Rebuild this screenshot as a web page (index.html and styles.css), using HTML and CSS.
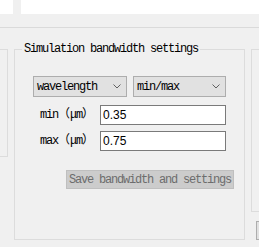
FILE: index.html
```html
<!DOCTYPE html>
<html lang="en">
<head>
    <meta charset="UTF-8">
    <meta name="viewport" content="width=device-width, initial-scale=1.0">
    <title>Simulation bandwidth settings</title>
    <link rel="stylesheet" href="styles.css">
</head>
<body>

<div class="topbar">
    <div class="topbar-left"></div>
    <div class="topbar-gap"></div>
    <div class="topbar-right"></div>
</div>
<div class="divider"></div>

<div class="panels">
    <div class="side-panel"></div>

    <div class="group">
        <div class="group-title">Simulation bandwidth settings</div>

        <div class="selects">
            <div class="combo combo-wide">
                <span>wavelength</span>
                <svg class="chevron" width="8" height="5" viewBox="0 0 8 5"><path d="M0.5 0.5 L4 4 L7.5 0.5" fill="none" stroke="#606060" stroke-width="1"/></svg>
            </div>
            <div class="combo">
                <span>min/max</span>
                <svg class="chevron" width="8" height="5" viewBox="0 0 8 5"><path d="M0.5 0.5 L4 4 L7.5 0.5" fill="none" stroke="#606060" stroke-width="1"/></svg>
            </div>
        </div>

        <div class="fields">
            <div class="field">
                <label class="field-label" for="min-value">min<span class="wide">（</span>μm<span class="wide">）</span></label>
                <input class="field-input" id="min-value" type="text" value="0.35">
            </div>
            <div class="field">
                <label class="field-label" for="max-value">max<span class="wide">（</span>μm<span class="wide">）</span></label>
                <input class="field-input" id="max-value" type="text" value="0.75">
            </div>
        </div>

        <button class="save-button" disabled>Save bandwidth and settings</button>
    </div>

    <div class="right-column">
        <div class="right-panel"></div>
        <div class="right-button"></div>
    </div>
</div>

</body>
</html>
```

FILE: styles.css
```css
body {
    margin: 0;
    background-color: #f0f0f0;
    font-family: "Liberation Mono", "Noto Sans CJK SC", monospace;
    font-size: 12px;
    letter-spacing: -1.2px;
    color: #000;
    overflow: hidden;
}
.topbar {
    display: flex;
    height: 14px;
}
.topbar-left {
    width: 13px;
    background: #fff;
}
.topbar-gap {
    width: 8px;
}
.topbar-right {
    flex: 1;
    background: #fff;
}
.divider {
    margin-top: 13px;
    height: 1px;
    background: #dadada;
}
.panels {
    display: flex;
    align-items: flex-start;
    padding-top: 21px;
}
.panels > * {
    flex-shrink: 0;
}
.side-panel {
    width: 7px;
    height: 106px;
    border: 1px solid #dcdcdc;
    border-left: none;
}
.group {
    margin-left: 6px;
    width: 211px;
    height: 189px;
    border: 1px solid #dcdcdc;
    padding-left: 18px;
}
.group-title {
    display: table;
    margin-top: -7px;
    margin-left: -11px;
    padding: 0 2px;
    line-height: 12px;
    background: #f0f0f0;
}
.selects {
    display: flex;
    gap: 6px;
    margin-top: 21px;
}
.combo {
    display: flex;
    align-items: center;
    justify-content: space-between;
    box-sizing: border-box;
    width: 93px;
    height: 21px;
    padding: 0 5px 0 3px;
    background: #e1e1e1;
    border: 1px solid #adadad;
    line-height: 12px;
}
.combo-wide {
    width: 94px;
}
.chevron {
    display: block;
}
.fields {
    display: flex;
    flex-direction: column;
    gap: 6px;
    margin-top: 8px;
}
.field {
    display: flex;
    align-items: center;
}
.field-label {
    width: 67px;
    padding-left: 7px;
    box-sizing: border-box;
    line-height: 12px;
}
.wide {
    letter-spacing: 0;
}
.field-input {
    box-sizing: border-box;
    width: 126px;
    height: 20px;
    margin: 0;
    padding: 0 2px;
    border: 1px solid #7a7a7a;
    background: #fff;
    font-family: "Liberation Sans", Arial, sans-serif;
    font-size: 12px;
    letter-spacing: 0;
    color: #000;
    outline: none;
}
.save-button {
    display: block;
    box-sizing: border-box;
    width: 168px;
    height: 19px;
    margin: 19px 0 0 33px;
    padding: 0 0 0 2px;
    text-align: left;
    background: #cccccc;
    border: 1px solid #bfbfbf;
    font-family: inherit;
    font-size: 12px;
    letter-spacing: -1.2px;
    line-height: 12px;
    color: #6d6d6d;
}
.right-column {
    display: flex;
    flex-direction: column;
    margin-left: 6px;
}
.right-panel {
    width: 40px;
    height: 161px;
    border: 1px solid #dcdcdc;
    border-right: none;
}
.right-button {
    width: 40px;
    height: 17px;
    margin: 9px 0 0 5px;
    background: #e1e1e1;
    border: 1px solid #adadad;
}
```
